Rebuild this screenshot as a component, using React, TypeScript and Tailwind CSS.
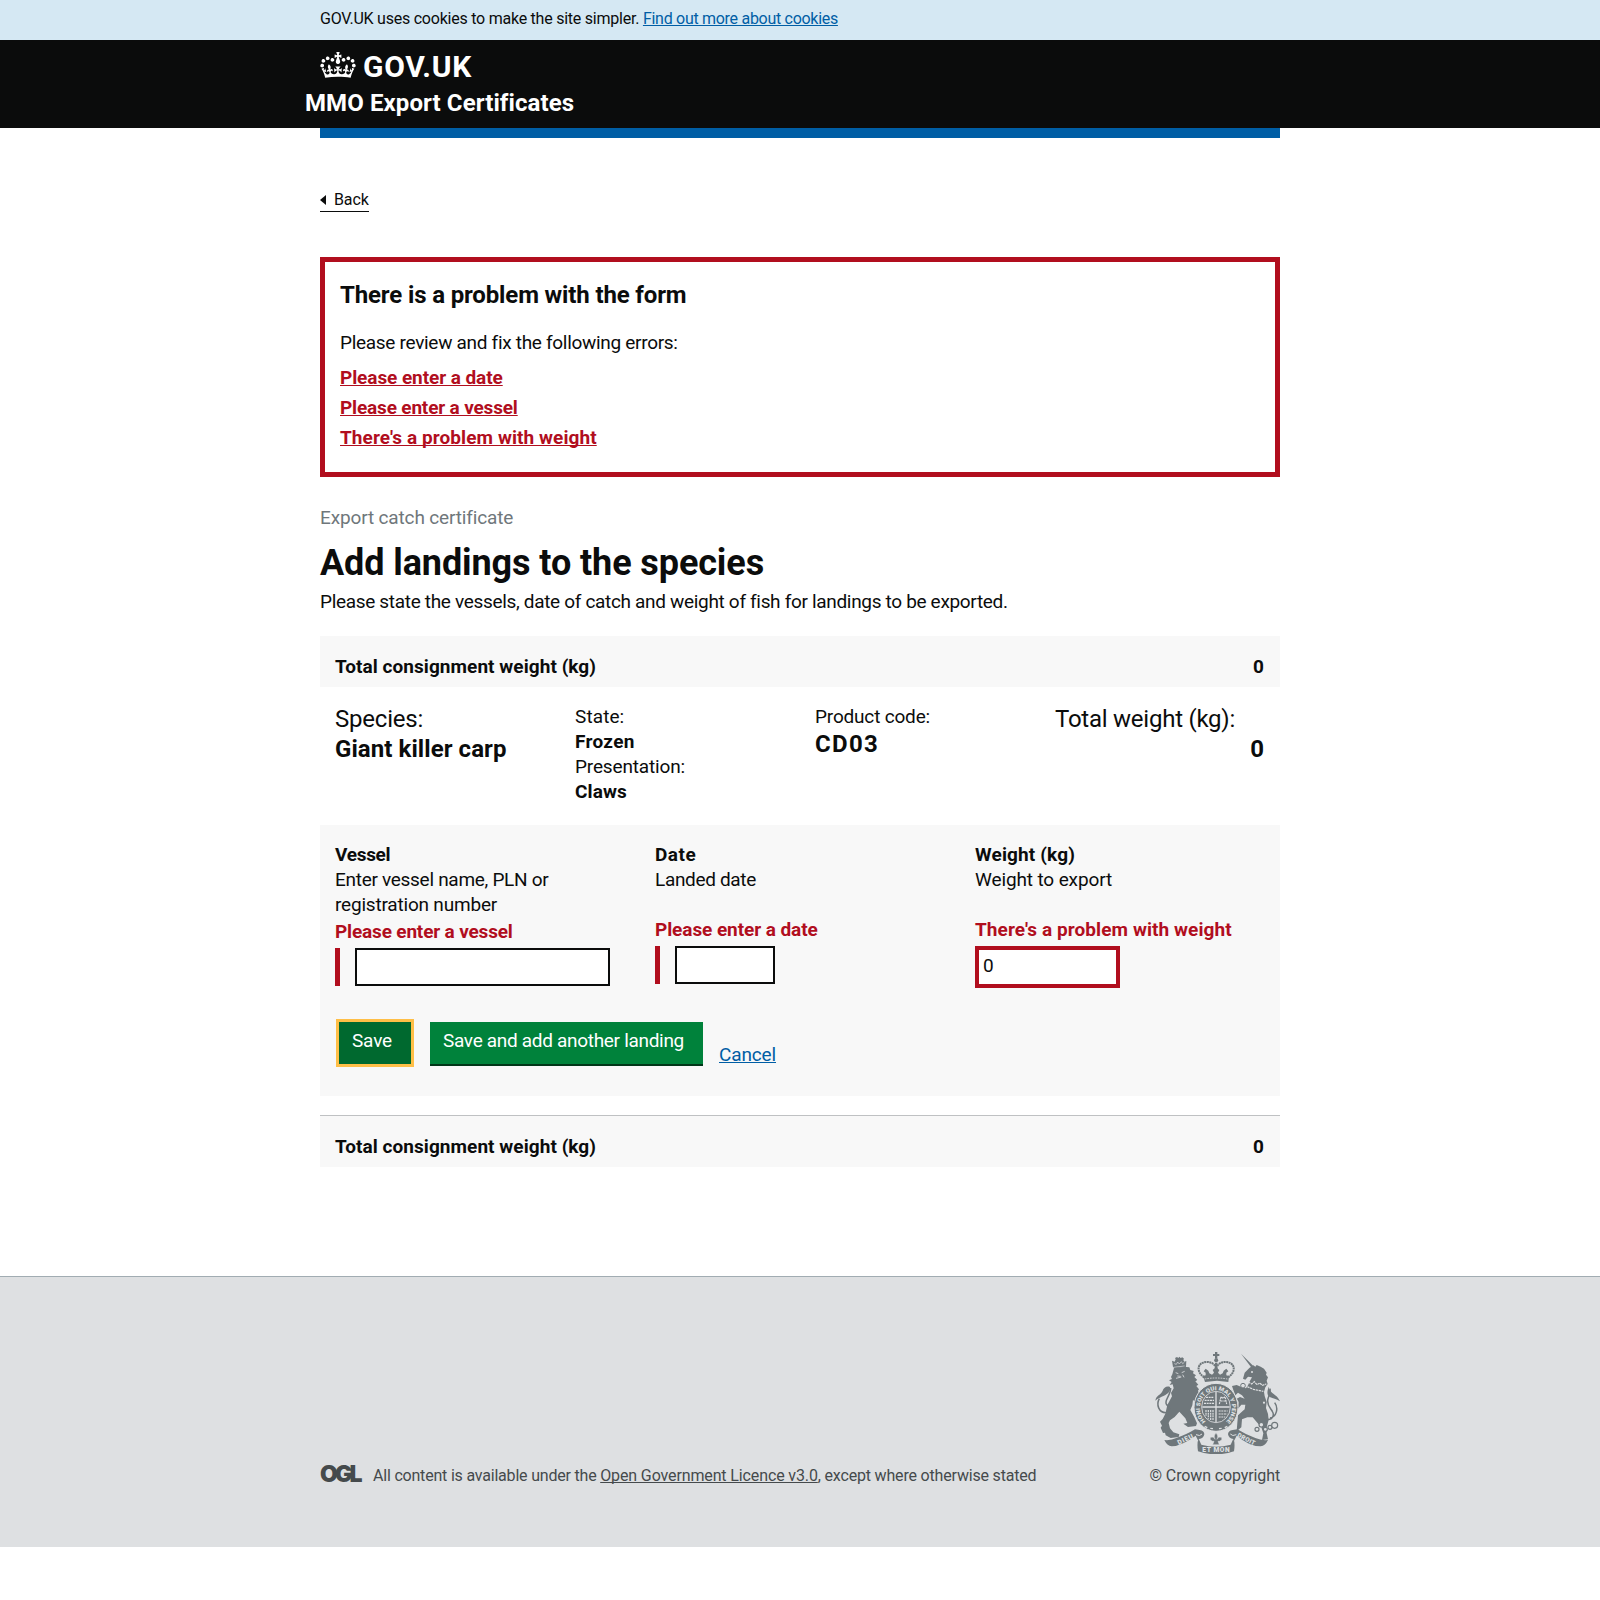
import type { ReactNode } from "react";

function CrownIcon() {
  return (
    <svg viewBox="0 0 132 97" className="h-[26px] w-9 fill-white" aria-hidden="true">
      <path
        fillRule="evenodd"
        d="M25 30.2c3.5 1.5 7.7-.2 9.1-3.7 1.5-3.6-.2-7.8-3.9-9.2-3.6-1.4-7.6.3-9.1 3.9-1.4 3.5.3 7.5 3.9 9zM9 39.5c3.6 1.5 7.8-.2 9.2-3.7 1.5-3.6-.2-7.8-3.9-9.1-3.6-1.5-7.6.2-9.1 3.8-1.4 3.5.3 7.5 3.8 9zM4.4 57.2c3.5 1.5 7.7-.2 9.1-3.8 1.5-3.6-.2-7.7-3.9-9.1-3.5-1.5-7.6.3-9.1 3.8-1.4 3.5.3 7.6 3.9 9.1zm38.3-21.4c3.5 1.5 7.7-.2 9.1-3.8 1.5-3.6-.2-7.7-3.9-9.1-3.6-1.5-7.6.3-9.1 3.8-1.3 3.6.4 7.7 3.9 9.1zm64.4-5.6c-3.6 1.5-7.8-.2-9.1-3.7-1.5-3.6.2-7.8 3.8-9.2 3.6-1.4 7.7.3 9.2 3.9 1.3 3.5-.4 7.5-3.9 9zm15.9 9.3c-3.6 1.5-7.7-.2-9.1-3.7-1.5-3.6.2-7.8 3.7-9.1 3.6-1.5 7.7.2 9.2 3.8 1.5 3.5-.3 7.5-3.8 9zm4.7 17.7c-3.6 1.5-7.8-.2-9.2-3.8-1.5-3.6.2-7.7 3.9-9.1 3.6-1.5 7.7.3 9.2 3.8 1.3 3.5-.4 7.6-3.9 9.1zM89.3 35.8c-3.6 1.5-7.8-.2-9.2-3.8-1.4-3.6.2-7.7 3.9-9.1 3.6-1.5 7.7.3 9.2 3.8 1.4 3.6-.3 7.7-3.9 9.1zM69.7 17.7l8.9 4.7V9.3l-8.9 2.8c-.2-.3-.5-.6-.9-.9L72.4 0H59.6l3.5 11.2c-.3.3-.6.5-.9.9l-8.8-2.8v13.1l8.8-4.7c.3.3.6.7.9.9l-5 15.4v.1c-.2.8-.4 1.6-.4 2.4 0 4.1 3.1 7.5 7 8.1h.2c.3 0 .7.1 1 .1.4 0 .7 0 1-.1h.2c4-.6 7.1-4.1 7.1-8.1 0-.8-.1-1.7-.4-2.4V34l-5.1-15.4c.4-.2.7-.6 1-.9zM66 92.8c16.9 0 32.8 1.1 47.1 3.2 4-16.9 8.9-26.7 14-33.5l-9.6-3.4c1 4.9 1.1 7.2 0 10.2-1.5-1.4-3-4.3-4.2-8.7L108.6 76c2.8-2 5-3.2 7.5-3.3-4.4 9.4-10 11.9-13.6 11.2-4.3-.8-6.3-4.6-5.6-7.9 1-4.7 5.7-5.9 8-.5 4.3-8.7-3-11.4-7.6-8.8 7.1-7.2 7.9-13.5 2.1-21.1-8 6.1-8.1 12.3-4.5 20.8-4.7-5.4-12.1-2.5-9.5 6.2 3.4-5.2 7.9-2 7.2 3.1-.6 4.3-6.4 7.8-13.5 7.2-10.3-.9-10.9-8-11.2-13.8 2.5-.5 7.1 1.8 11 7.3L80.2 60c-4.1 4.4-8 5.3-12.3 5.4 1.4-4.4 8-11.6 8-11.6H55.5s6.4 7.2 7.9 11.6c-4.2-.1-8-1-12.3-5.4l1.4 16.4c3.9-5.5 8.5-7.7 10.9-7.3-.3 5.8-.9 12.8-11.1 13.8-7.2.6-12.9-2.9-13.5-7.2-.7-5 3.8-8.3 7.1-3.1 2.7-8.7-4.6-11.6-9.4-6.2 3.7-8.5 3.6-14.7-4.6-20.8-5.8 7.6-5 13.9 2.2 21.1-4.7-2.6-11.9.1-7.7 8.8 2.3-5.5 7.1-4.2 8.1.5.7 3.3-1.3 7.1-5.7 7.9-3.5.7-9-1.8-13.5-11.2 2.5.1 4.7 1.3 7.5 3.3l-4.7-15.4c-1.2 4.4-2.7 7.2-4.3 8.7-1.1-3-.9-5.3 0-10.2l-9.5 3.4c5 6.9 9.9 16.7 14 33.5 14.8-2.1 30.8-3.2 47.7-3.2z"
      />
    </svg>
  );
}

function RoyalArms() {
  const ink = "#6f777b";
  const paper = "#dee0e2";
  return (
    <svg viewBox="45 36 375 306" className="h-[102px] w-[125px]" fill={ink} aria-hidden="true">
      {/* lion */}
      <path d="M99 81l-3-19 8 3 3-7-2-4 6-3 4 3 3-4 4 4 5-2 5 4-2 4 3 5 6-2-1 17-5 2-29 3z" />
      <path d="M103 71l6 2 4-7 5 6 6-7 4 6 5-4M100 82l34-4" fill="none" stroke={paper} strokeWidth="2" />
      <path d="M102 84l30-4 16 2 3 8 10 3-2 7 9 6-5 5 9 9-6 4 9 10-6 4 8 10-3 4 3 10 12 8-6 14-12-3-4 6-8-7-2 16-6 14 12 22 8 18-3 8-24 3-14-10 12-2-6-14-18-20-14 16-14 10-4 8 4 16 10 12 18 6-2 8-24 3-15-8-2-8-6 1-7-16 4-6-6-12 8-8 8-16 6-26 14-26-3-10 8-14-3-12-9 2 6-9-8-5 9-4-3-6 4-8z" />
      <path d="M107 98l8 3M125 98l9-4M112 108l10 1M108 115l16-4M128 104l4 8" stroke={paper} strokeWidth="2.5" fill="none" />
      <path d="M46 182c3-18 16-16 22-30 3-9 12-15 22-11 3 14-6 20-18 26-10 5-18 7-26 15z" />
      <path d="M58 176c-10 18-2 42 20 42 12 0 14-14 2-24-10-12 12-26 12-50" fill="none" stroke={ink} strokeWidth="4.5" />

      {/* unicorn */}
      <path d="M303 41l40 40-5 7z" />
      <path d="M309 116L314 98L328 84L340 76L346 80L350 75L362 80L372 86L380 98L378 104L384 112L380 122L383 132L376 142L372 156L374 168L380 186L378 204L384 222L386 240L380 262L380 280L384 298L366 300L370 280L364 262L350 246L338 232L322 232L306 238L304 262L290 274L292 248L294 226L314 208L316 194L304 194L294 206L296 186L290 176L300 171L314 176L306 166L294 158L286 166L280 150L276 138L290 135L306 142L318 145L324 136L330 122L336 112L324 110L316 119Z" />
      <circle cx="336" cy="96" r="3" fill={paper} />
      <path d="M325 126l10 6 8-7 8 9 8-5 8 7 12-4M322 140l18 8 30 6" stroke={paper} strokeWidth="3.5" fill="none" strokeDasharray="7 2" />
      <circle cx="309" cy="137" r="7" fill={paper} stroke={ink} strokeWidth="3" />
      <path d="M378 238c16 4 26-10 20-22-4-10-20-20-14-40 4-12 8-18 6-30M404 188c12 16 6 42-14 46" fill="none" stroke={ink} strokeWidth="4.5" />
      <path d="M384 166c-4-10 0-18 2-26 4 22 26 22 34 44-14-10-26-6-36-18z" />
      <g fill={paper} stroke={ink} strokeWidth="3.5">
        <circle cx="372" cy="188" r="5" />
        <circle cx="351" cy="268" r="6" />
        <circle cx="364" cy="254" r="7" />
        <circle cx="376" cy="268" r="6" />
        <circle cx="390" cy="262" r="6" />
        <circle cx="404" cy="256" r="9" />
      </g>

      {/* central crown */}
      <path d="M225 36h7v6h6v6h-6v8h-7v-8h-6v-6h6z" />
      <circle cx="228.5" cy="61" r="6" />
      <path d="M193 112c-26-16-22-46 8-46 14 0 20 6 24 12M264 112c26-16 22-46-8-46-14 0-20 6-24 12" fill="none" stroke={ink} strokeWidth="6" strokeDasharray="6 1.5" />
      <path d="M225 68h7l2 36h-11z" />
      <path d="M189 108l8-2 0-8-6-4 6-8 8 6 3 8 8 4 6-6-4-8 10-8 10 8-4 8 6 6 8-4 3-8 8-6 6 8-6 4 0 8 8 2-2 18-34-4-36 4z" />
      <path d="M194 117q34-6 68 0" fill="none" stroke={paper} strokeWidth="2.5" strokeDasharray="5 3" />

      {/* garter and shield */}
      <ellipse cx="228" cy="202" rx="66" ry="72" stroke={paper} strokeWidth="3" />
      <ellipse cx="228" cy="201" rx="43" ry="47" fill="none" stroke={paper} strokeWidth="2.5" />
      <path id="garter" d="M198 245A48 53 0 1 1 258 245" fill="none" />
      <text fontFamily="Roboto" fontSize="17" fontWeight="900" fill={paper}>
        <textPath href="#garter" textLength="250" lengthAdjust="spacingAndGlyphs" startOffset="1">
          HONI SOIT QUI MAL Y PENSE
        </textPath>
      </text>
      <path d="M228 156v90M187 201h82" stroke={paper} strokeWidth="4" />
      <path d="M198 172h24M194 181h28M192 190h30M238 192l5-22 6 5 6-5 5 22M242 183h15M236 213h27M236 222h26M236 231h20M198 210v18M205 210v26M212 210v30M219 210v32" stroke={paper} strokeWidth="3.5" strokeDasharray="6 2" fill="none" />
      <path d="M194 259l8 4M211 265l8 1M237 266l8-1M254 263l8-4" stroke={paper} strokeWidth="4" />

      {/* ribbon */}
      <path d="M73 300q20 2 36-6 34-12 56-26l14 2q14 2 14 13-2 12-16 14l-2 6-8-16q-40 30-72 32-14-2-22-19z" />
      <path d="M384 300q-20 2-38-6-32-12-54-26l-14 2q-14 2-14 13 2 12 16 14l2 6 8-16q38 32 72 32 14-2 22-19z" />
      <path d="M176 296q-6 12-2 38 54 18 108 0 4-26-2-38l-8 18q-44 12-88 0z" />
      <path d="M168 284q12 6 18-2M289 284q-12 6-18-2" stroke={paper} strokeWidth="3" fill="none" />
      <g fontFamily="Roboto" fontWeight="900" fill={paper} textAnchor="middle">
        <text transform="translate(139 304) rotate(-26)" fontSize="20" textLength="50">DIEU</text>
        <text transform="translate(228 336)" fontSize="20" textLength="82">ET MON</text>
        <text transform="translate(316 303) rotate(27)" fontSize="19" textLength="58">DROIT</text>
      </g>
      <path d="M228 278q9 10 3 20 4-10 13-6 6 8-6 12h-4l4 10h-20l4-10h-4q-12-4-6-12 9-4 13 6-6-10 3-20z" stroke={paper} strokeWidth="1.5" />
    </svg>
  );
}

function TotalRow() {
  return (
    <div className="flex h-[51px] items-start justify-between bg-[#f8f8f8] px-[15px] pt-[18px] font-bold">
      <span className="tracking-[0.057px]">Total consignment weight (kg)</span>
      <span className="pr-px">0</span>
    </div>
  );
}

function Link({ className, children }: { className: string; children: ReactNode }) {
  return (
    <a href="#" className={`underline decoration-1 underline-offset-1 [text-decoration-skip-ink:none] ${className}`}>
      {children}
    </a>
  );
}

export default function App() {
  return (
    <div className="min-h-[1600px] bg-white text-[19px] leading-[25px] text-[#0b0c0c] [font-family:Roboto,'Liberation_Sans',sans-serif]">
      <div className="h-10 bg-[#d5e8f3] pt-[9px] text-base leading-5">
        <p className="mx-auto w-[960px] tracking-[-0.235px]">
          GOV.UK uses cookies to make the site simpler.{" "}
          <Link className="text-[#005ea5] tracking-[-0.289px]">Find out more about cookies</Link>
        </p>
      </div>

      <header className="h-[88px] bg-[#0b0c0c] text-white">
        <div className="mx-auto w-[960px] pt-3">
          <div className="flex h-[30px] items-start">
            <CrownIcon />
            <span className="ml-[7px] text-[30px] leading-[30px] font-bold tracking-[0.7px]">GOV.UK</span>
          </div>
          <p className="mt-[6px] -ml-[15px] text-2xl leading-[30px] font-bold tracking-[0.1px]">MMO Export Certificates</p>
        </div>
      </header>

      <main className="mx-auto h-[1148px] w-[960px]">
        <div className="h-[10px] bg-[#005ea5]" />

        <a href="#" className="mt-[52px] inline-flex h-[22px] items-start border-b border-[#0b0c0c] text-base leading-5">
          <svg viewBox="0 0 6 10" className="mt-[5px] mr-2 h-[10px] w-[6px] fill-[#0b0c0c]" aria-hidden="true">
            <path d="M6 0v10L0 5z" />
          </svg>
          <span className="tracking-[-0.1px]">Back</span>
        </a>

        <section className="mt-[45px] h-[220px] border-[5px] border-[#b10e1e] px-[15px] pt-[18px]">
          <h2 className="text-2xl leading-[30px] font-bold tracking-[-0.14px]">There is a problem with the form</h2>
          <p className="mt-5 tracking-[-0.3px]">Please review and fix the following errors:</p>
          <ul className="mt-[10px] font-bold text-[#b10e1e]">
            <li className="mb-[5px]">
              <Link className="tracking-[-0.077px]">Please enter a date</Link>
            </li>
            <li className="mb-[5px]">
              <Link className="tracking-[-0.166px]">Please enter a vessel</Link>
            </li>
            <li>
              <Link className="tracking-[0.08px]">There's a problem with weight</Link>
            </li>
          </ul>
        </section>

        <p className="mt-7 tracking-[-0.147px] text-[#6f777b]">Export catch certificate</p>
        <h1 className="mt-[13px] text-4xl leading-10 font-bold tracking-[-0.1px]">Add landings to the species</h1>
        <p className="mt-[6px] mb-[22px] tracking-[-0.322px]">
          Please state the vessels, date of catch and weight of fish for landings to be exported.
        </p>

        <TotalRow />

        <div className="grid h-[138px] grid-cols-4">
          <div className="px-[15px] pt-[17px] text-2xl leading-[30px]">
            <p className="tracking-[-0.22px]">Species:</p>
            <p className="font-bold tracking-[0.07px]">Giant killer carp</p>
          </div>
          <div className="px-[15px] pt-[17px]">
            <p className="tracking-[0.1px]">State:</p>
            <p className="font-bold tracking-[0.3px]">Frozen</p>
            <p className="tracking-[-0.155px]">Presentation:</p>
            <p className="font-bold tracking-[0.13px]">Claws</p>
          </div>
          <div className="px-[15px] pt-[17px]">
            <p className="tracking-[-0.18px]">Product code:</p>
            <p className="text-2xl leading-[30px] font-bold tracking-[1.3px]">CD03</p>
          </div>
          <div className="px-[15px] pt-[17px] text-2xl leading-[30px]">
            <p className="tracking-[-0.246px]">Total weight (kg):</p>
            <p className="pr-px text-right font-bold">0</p>
          </div>
        </div>

        <section className="h-[271px] bg-[#f8f8f8] pt-[17px]">
          <div className="grid h-[180px] grid-cols-3">
            <div className="pl-[15px]">
              <p className="font-bold tracking-[-0.3px]">Vessel</p>
              <p className="tracking-[-0.29px]">Enter vessel name, PLN or</p>
              <p className="tracking-[-0.197px]">registration number</p>
              <p className="mt-[2px] font-bold tracking-[-0.166px] text-[#b10e1e]">Please enter a vessel</p>
              <div className="mt-1 border-l-[5px] border-[#b10e1e] pl-[15px]">
                <input className="block h-[38px] w-[255px] border-2 border-[#0b0c0c] bg-white px-1" />
              </div>
            </div>
            <div className="pl-[15px]">
              <p className="font-bold tracking-[0.5px]">Date</p>
              <p className="tracking-[-0.33px]">Landed date</p>
              <p className="mt-[25px] font-bold tracking-[-0.077px] text-[#b10e1e]">Please enter a date</p>
              <div className="mt-1 border-l-[5px] border-[#b10e1e] pl-[15px]">
                <input className="block h-[38px] w-[100px] border-2 border-[#0b0c0c] bg-white px-1" />
              </div>
            </div>
            <div className="pl-[15px]">
              <p className="font-bold tracking-[0.145px]">Weight (kg)</p>
              <p className="tracking-[-0.127px]">Weight to export</p>
              <p className="mt-[25px] font-bold tracking-[0.08px] text-[#b10e1e]">There's a problem with weight</p>
              <input
                defaultValue="0"
                className="mt-1 block h-[42px] w-[145px] border-4 border-[#b10e1e] bg-white px-1 pb-1"
              />
            </div>
          </div>
          <div className="flex items-start pl-[19px] text-white">
            <button className="flex h-[42px] w-[72px] items-start bg-[#00692f] pt-[6px] pl-[13px] tracking-[-0.159px] outline-3 outline-[#ffbf47]">
              Save
            </button>
            <button className="ml-[19px] flex h-11 w-[273px] items-start border-b-2 border-[#003618] bg-[#00823b] pt-[6px] pl-[13px] tracking-[-0.31px]">
              Save and add another landing
            </button>
            <span className="mt-5 ml-4">
              <Link className="tracking-[-0.139px] text-[#005ea5]">Cancel</Link>
            </span>
          </div>
        </section>

        <div className="mt-[19px] border-t border-[#bfc1c3]">
          <TotalRow />
        </div>
      </main>

      <footer className="h-[271px] border-t border-[#a1acb2] bg-[#dee0e2] text-base leading-5 text-[#454a4c]">
        <div className="mx-auto flex h-[209px] w-[960px] items-end justify-between">
          <div className="flex items-end">
            <span className="mb-[3px] w-[53px] text-[23px] leading-[17px] font-black tracking-[-2.9px] [font-family:Inter]">OGL</span>
            <p className="tracking-[-0.2px]">
              All content is available under the{" "}
              <Link className="tracking-[-0.126px]">Open Government Licence v3.0</Link>
              <span className="tracking-[-0.18px]">, except where otherwise stated</span>
            </p>
          </div>
          <div className="flex flex-col items-end">
            <RoyalArms />
            <p className="mt-3 tracking-[-0.12px]">© Crown copyright</p>
          </div>
        </div>
      </footer>
    </div>
  );
}
